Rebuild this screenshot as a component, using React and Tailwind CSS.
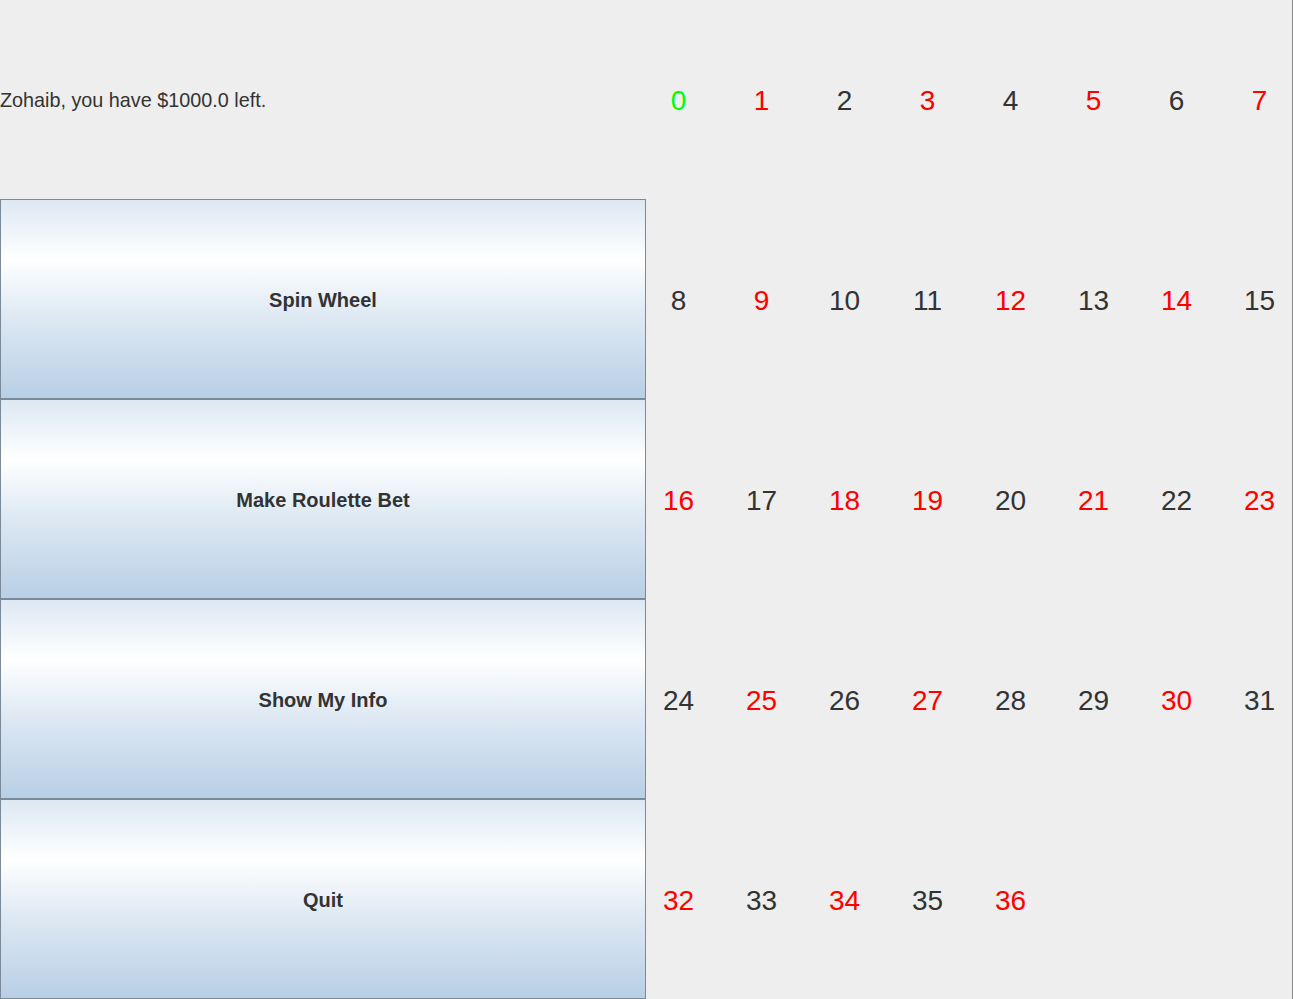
const numbers = Array.from({ length: 37 }, (_, i) => i);
const reds = [1, 3, 5, 7, 9, 12, 14, 16, 18, 19, 21, 23, 25, 27, 30, 32, 34, 36];

function colorFor(n) {
  if (n === 0) return 'text-[#00ff00]';
  if (reds.includes(n)) return 'text-[#ff0000]';
  return 'text-[#333333]';
}

const buttons = ['Spin Wheel', 'Make Roulette Bet', 'Show My Info', 'Quit'];

export default function App() {
  return (
    <div
      className="w-[1293px] h-[999px] bg-[#eeeeee] flex overflow-hidden border-r border-[#8a8a8a]"
      style={{ fontFamily: '"Liberation Sans", Arial, sans-serif' }}
    >
      <div className="w-[646px] flex flex-col shrink-0">
        <div className="h-[199px] pt-[2px] flex items-center text-[19.8px] text-[#333333]">
          Zohaib, you have $1000.0 left.
        </div>
        {buttons.map((b) => (
          <button
            key={b}
            className="h-[200px] w-full pt-[2px] border border-[#7a8a99] font-bold text-[20px] text-[#333333] bg-[linear-gradient(to_bottom,#dde8f3_0%,#ffffff_30%,#dde8f3_60%,#b8cfe5_100%)]"
          >
            {b}
          </button>
        ))}
      </div>
      <div className="-ml-[9px] grid grid-cols-[repeat(8,83px)] grid-rows-[repeat(5,200px)] shrink-0">
        {numbers.map((n) => (
          <div key={n} className={`flex items-center justify-center pt-[2px] text-[28px] ${colorFor(n)}`}>
            {n}
          </div>
        ))}
      </div>
    </div>
  );
}
